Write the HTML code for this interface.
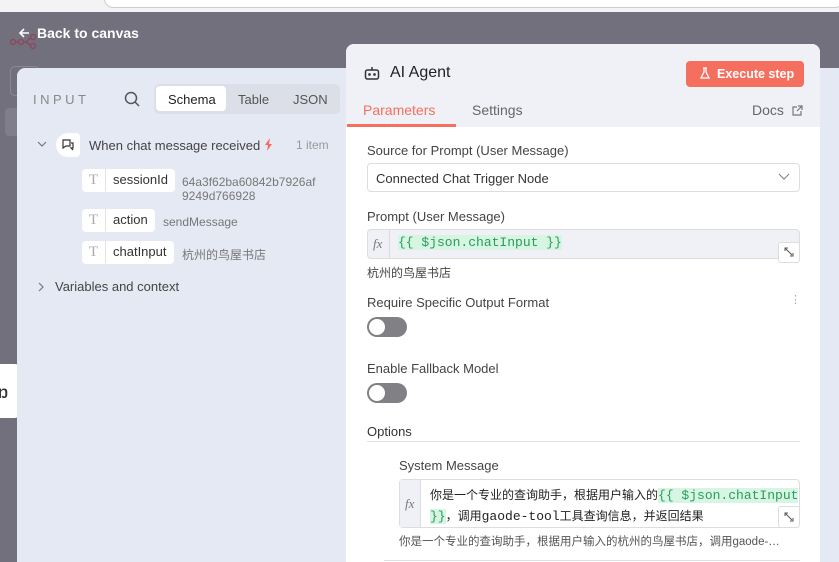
<!DOCTYPE html>
<html><head><meta charset="utf-8"><style>
*{box-sizing:border-box;margin:0;padding:0}
body{width:839px;height:562px;overflow:hidden;background:#72707d;font-family:"Liberation Sans","Noto Sans CJK SC",sans-serif;position:relative;color:#333}
.abs{position:absolute}
.top{left:0;top:0;width:839px;height:12px;background:#f3f3f3}
.top i{position:absolute;left:104px;top:-10px;width:740px;height:18px;background:#fff;border:1px solid #ccc;border-radius:10px}
.left{left:17px;top:68px;width:330px;height:494px;background:#e5e9f3;border-radius:8px 0 0 0}
.right{left:820px;top:68px;width:19px;height:494px;background:#e5e9f3}
.main{left:346px;top:44px;width:474px;height:518px;background:#fff;border-radius:8px 8px 0 0;overflow:hidden}
.hdr{height:83px;background:#f0f1f7;position:relative}
.t{position:absolute;white-space:nowrap}
.lbl{font-size:13px;color:#444}
.tag{position:absolute;background:#fff;border-radius:4px;height:23px;font-size:13px;color:#333;line-height:22px}
.tag b{display:inline-block;width:24px;text-align:center;font-weight:normal;color:#aaa;border-right:1px solid #e3e3e3;font-family:"Liberation Serif",serif;font-size:15px}
.tag span{padding:0 7px}
.tog{position:absolute;width:40px;height:20px;border-radius:10px;background:#808085}
.tog:after{content:"";position:absolute;left:2px;top:2px;width:16px;height:16px;border-radius:50%;background:#fff}
.mono{font-family:"Liberation Mono",monospace}
.fx{font-family:"Liberation Serif",serif;font-style:italic;color:#777;font-size:13px}
.ex{position:absolute;background:#fff;border:1px solid #ddd;border-radius:3px}
</style></head><body>
<div class="abs top"><i></i></div>
<svg class="abs" style="left:18px;top:27px" width="12" height="12"><path d="M11 6H2M6 2L2 6l4 4" fill="none" stroke="#fff" stroke-width="1.6"/></svg>
<div class="t" style="left:37px;top:25px;color:#fff;font-size:14px;font-weight:bold">Back to canvas</div>
<svg class="abs" style="left:9px;top:34px" width="30" height="16"><g fill="none" stroke="#8a4a5e" stroke-width="1.5"><circle cx="4" cy="8" r="2.5"/><circle cx="12" cy="8" r="2.5"/><circle cx="24" cy="3" r="2.5"/><circle cx="24" cy="12" r="2.5"/><path d="M6 8h4M14 8h3l4-4M17 8l4 3"/></g></svg>
<div class="abs" style="left:10px;top:66px;width:30px;height:30px;border:1px solid #8a8895;border-radius:5px"></div>
<div class="abs" style="left:5px;top:108px;width:30px;height:28px;background:#807e8b;border-radius:4px"></div>
<div class="abs" style="left:-5px;top:364px;width:25px;height:54px;background:#fff;border-radius:5px"></div>
<div class="t" style="left:-2px;top:385px;font-size:14px;font-weight:bold">Ŋ</div>
<div class="abs left"></div>
<div class="abs right"></div>
<div class="t" style="left:33px;top:92px;font-size:13px;letter-spacing:3.5px;color:#888">INPUT</div>
<svg class="abs" style="left:124px;top:91px" width="16" height="16"><circle cx="7" cy="7" r="5.5" fill="none" stroke="#555" stroke-width="1.5"/><path d="M11 11l4 4" stroke="#555" stroke-width="1.5"/></svg>
<div class="abs" style="left:154px;top:84px;width:186px;height:30px;background:#dcdfe8;border-radius:5px"></div>
<div class="abs" style="left:156px;top:86px;width:70px;height:25px;background:#fff;border-radius:4px"></div>
<div class="t" style="left:168px;top:92px;font-size:13px;color:#222">Schema</div>
<div class="t" style="left:238px;top:92px;font-size:13px;color:#555">Table</div>
<div class="t" style="left:293px;top:92px;font-size:13px;color:#555">JSON</div>
<svg class="abs" style="left:37px;top:141px" width="10" height="6"><path d="M1 1l4 4 4-4" fill="none" stroke="#777" stroke-width="1.2"/></svg>
<div class="abs" style="left:56px;top:133px;width:24px;height:24px;background:#fff;border-radius:12px 4px 4px 12px"></div>
<svg class="abs" style="left:61px;top:138px" width="14" height="14"><path d="M2 2h7v6H5l-3 2zM10 5h2v5h-2l2 2" fill="none" stroke="#333" stroke-width="1.2"/></svg>
<div class="t" style="left:89px;top:138px;font-size:13px;color:#444">When chat message received</div>
<svg class="abs" style="left:264px;top:138px" width="10" height="13"><path d="M6 0L1 7h3l-1 6 5-7H5z" fill="#f26c5a"/></svg>
<div class="t" style="left:296px;top:138px;font-size:12px;color:#999">1 item</div>
<div class="tag" style="left:82px;top:169px"><b>T</b><span>sessionId</span></div>
<div class="t" style="left:182px;top:175px;font-size:12px;color:#777;line-height:14px">64a3f62ba60842b7926af<br>9249d766928</div>
<div class="tag" style="left:82px;top:209px"><b>T</b><span>action</span></div>
<div class="t" style="left:163px;top:215px;font-size:12px;color:#777">sendMessage</div>
<div class="tag" style="left:82px;top:241px"><b>T</b><span>chatInput</span></div>
<div class="t" style="left:182px;top:246px;font-size:12px;color:#777">杭州的鸟屋书店</div>
<svg class="abs" style="left:38px;top:282px" width="6" height="10"><path d="M1 1l4 4-4 4" fill="none" stroke="#777" stroke-width="1.2"/></svg>
<div class="t" style="left:55px;top:279px;font-size:13px;color:#444">Variables and context</div>

<div class="abs main">
 <div class="hdr">
  <svg class="abs" style="left:18px;top:22px" width="16" height="14"><g fill="none" stroke="#333" stroke-width="1.5"><rect x="1.5" y="4" width="13" height="9" rx="2"/><path d="M8 1v3"/><circle cx="5.5" cy="8.5" r=".6"/><circle cx="10.5" cy="8.5" r=".6"/></g></svg>
  <div class="t" style="left:44px;top:20px;font-size:16px;color:#222">AI Agent</div>
  <div class="abs" style="left:340px;top:17px;width:118px;height:26px;background:#f46f5e;border-radius:4px"></div>
  <svg class="abs" style="left:354px;top:23px" width="10" height="13"><path d="M3 1h4M4 1v4L1 11h8L6 5V1" fill="none" stroke="#fff" stroke-width="1.3"/></svg>
  <div class="t" style="left:371px;top:23px;font-size:12.5px;color:#fff;font-weight:bold">Execute step</div>
  <div class="t" style="left:17px;top:58px;font-size:14px;color:#f46f5e">Parameters</div>
  <div class="abs" style="left:1px;top:80px;width:109px;height:3px;background:#f46f5e"></div>
  <div class="t" style="left:126px;top:58px;font-size:14px;color:#666">Settings</div>
  <div class="t" style="left:406px;top:58px;font-size:14px;color:#666">Docs</div>
  <svg class="abs" style="left:446px;top:61px" width="11" height="11"><path d="M5 2H1v8h8V6M6 1h4v4M10 1L5 6" fill="none" stroke="#777" stroke-width="1.2"/></svg>
 </div>
 <div class="t lbl" style="left:21px;top:99px">Source for Prompt (User Message)</div>
 <div class="abs" style="left:21px;top:119px;width:433px;height:29px;border:1px solid #ddd;border-radius:4px"></div>
 <div class="t" style="left:30px;top:127px;font-size:13px;color:#333">Connected Chat Trigger Node</div>
 <svg class="abs" style="left:432px;top:129px" width="12" height="8"><path d="M1 1l5 5 5-5" fill="none" stroke="#888" stroke-width="1.2"/></svg>
 <div class="t lbl" style="left:21px;top:165px">Prompt (User Message)</div>
 <div class="abs" style="left:21px;top:185px;width:433px;height:30px;border:1px solid #ddd;border-radius:4px;background:#f0f1f7"></div>
 <div class="abs" style="left:43px;top:186px;width:1px;height:28px;background:#ddd"></div>
 <div class="t fx" style="left:27px;top:192px">fx</div>
 <div class="t mono" style="left:52px;top:191px;font-size:13px;color:#2d9a5c;background:#d6f5e3">{{ $json.chatInput }}</div>
 <div class="ex" style="left:432px;top:198px;width:22px;height:21px"></div>
 <svg class="abs" style="left:438px;top:203px" width="10" height="10"><path d="M1 4V1h3M1 1l7 7M9 6v3H6" fill="none" stroke="#555" stroke-width="1"/></svg>
 <div class="t" style="left:21px;top:220px;font-size:12px;color:#444">杭州的鸟屋书店</div>
 <div class="t lbl" style="left:21px;top:251px">Require Specific Output Format</div>
 <div class="t" style="left:444px;top:249px;font-size:11px;color:#aaa">⋮</div>
 <div class="tog" style="left:21px;top:273px"></div>
 <div class="t lbl" style="left:21px;top:317px">Enable Fallback Model</div>
 <div class="tog" style="left:21px;top:339px"></div>
 <div class="t" style="left:21px;top:380px;font-size:13px;color:#333">Options</div>
 <div class="abs" style="left:21px;top:397px;width:433px;height:1px;background:#dde0e8"></div>
 <div class="t lbl" style="left:53px;top:414px">System Message</div>
 <div class="abs" style="left:53px;top:435px;width:401px;height:49px;border:1px solid #ddd;border-radius:4px"></div>
 <div class="abs" style="left:54px;top:436px;width:21px;height:47px;background:#f0f1f7;border-right:1px solid #ddd"></div>
 <div class="t fx" style="left:59px;top:452px">fx</div>
 <div class="t" style="left:84px;top:441px;font-size:12px;line-height:20px;color:#222">你是一个专业的查询助手，根据用户输入的<span class="mono" style="font-size:13px;color:#2d9a5c;background:#d6f5e3">{{ $json.chatInput </span><br><span class="mono" style="font-size:13px;color:#2d9a5c;background:#d6f5e3">}}</span>，调用<span class="mono" style="font-size:13px">gaode-tool</span>工具查询信息，并返回结果</div>
 <div class="ex" style="left:432px;top:462px;width:22px;height:22px"></div>
 <svg class="abs" style="left:438px;top:468px" width="10" height="10"><path d="M1 4V1h3M1 1l7 7M9 6v3H6" fill="none" stroke="#555" stroke-width="1"/></svg>
 <div class="t" style="left:53px;top:489px;font-size:11.5px;color:#555">你是一个专业的查询助手，根据用户输入的杭州的鸟屋书店，调用gaode-…</div>
 <div class="abs" style="left:38px;top:516px;width:416px;height:1px;background:#dde0e8"></div>
</div>
</body></html>
